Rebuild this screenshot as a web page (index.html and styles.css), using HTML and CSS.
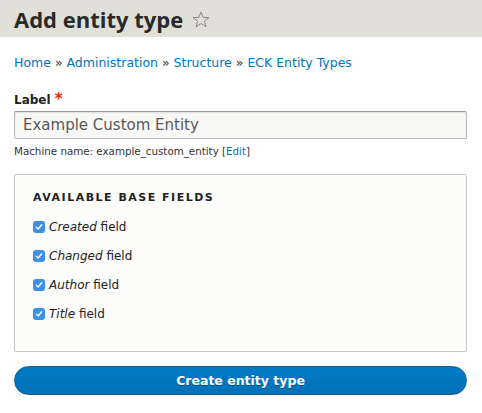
FILE: index.html
```html
<!DOCTYPE html>
<html>
<head>
<meta charset="utf-8">
<link rel="stylesheet" href="styles.css">
</head>
<body>
<header class="page-header">
  <h1 class="title">Add entity type <svg class="star" width="18" height="17" viewBox="0 0 20 19"><polygon points="10,1.2 12.4,7.1 18.8,7.3 13.8,11.3 15.6,17.6 10,14 4.4,17.6 6.2,11.3 1.2,7.3 7.6,7.1" fill="none" stroke="#8a8a80" stroke-width="1.1" stroke-linejoin="round"/></svg></h1>
</header>
<main class="content">
  <nav class="breadcrumb"><a href="#">Home</a> » <a href="#">Administration</a> » <a href="#">Structure</a> » <a href="#">ECK Entity Types</a></nav>
  <div class="form-item">
    <label class="label">Label <span class="req">*</span></label>
    <div class="input">Example Custom Entity</div>
    <div class="machine">Machine name: example_custom_entity <span class="edit">[<a href="#">Edit</a>]</span></div>
  </div>
  <fieldset class="fieldset">
    <div class="legend">Available base fields</div>
    <div class="checks">
      <div class="check"><span class="box"><svg width="8" height="8" viewBox="0 0 8 8"><path d="M1.3 4.2 L3.2 6 L6.7 1.8" fill="none" stroke="#fff" stroke-width="1.4" stroke-linecap="round" stroke-linejoin="round"/></svg></span><span><em>Created</em> field</span></div>
      <div class="check"><span class="box"><svg width="8" height="8" viewBox="0 0 8 8"><path d="M1.3 4.2 L3.2 6 L6.7 1.8" fill="none" stroke="#fff" stroke-width="1.4" stroke-linecap="round" stroke-linejoin="round"/></svg></span><span><em>Changed</em> field</span></div>
      <div class="check"><span class="box"><svg width="8" height="8" viewBox="0 0 8 8"><path d="M1.3 4.2 L3.2 6 L6.7 1.8" fill="none" stroke="#fff" stroke-width="1.4" stroke-linecap="round" stroke-linejoin="round"/></svg></span><span><em>Author</em> field</span></div>
      <div class="check"><span class="box"><svg width="8" height="8" viewBox="0 0 8 8"><path d="M1.3 4.2 L3.2 6 L6.7 1.8" fill="none" stroke="#fff" stroke-width="1.4" stroke-linecap="round" stroke-linejoin="round"/></svg></span><span><em>Title</em> field</span></div>
    </div>
  </fieldset>
  <button class="btn">Create entity type</button>
</main>
</body>
</html>
```
FILE: styles.css
```css
* { box-sizing: border-box; }
html, body { margin: 0; padding: 0; background: #fff; }
body { font-family: "DejaVu Sans", "Open Sans", sans-serif; color: #222330; width: 482px; height: 413px; overflow: hidden; }
.page-header { background: #e0e0d8; height: 37px; padding: 0 14px; display: flex; align-items: center; }
.title { margin: 0; font-family: "Open Sans", sans-serif; font-size: 22px; font-weight: bold; color: #2a2a2a; display: flex; align-items: center; gap: 9px; line-height: 1; }
.star { margin-top: 1px; }
.content { padding: 18px 15px 0 14px; }
.breadcrumb { font-size: 12.5px; color: #333; line-height: 16px; height: 16px; }
.breadcrumb a { color: #0074bd; text-decoration: none; }
.form-item { margin-top: 21px; }
.label { display: block; font-size: 12px; font-weight: bold; color: #222; line-height: 14px; }
.req { color: #e62600; font-size: 15px; }
.input { margin-top: 4px; height: 28px; border: 1px solid #b8b8b8; border-top-color: #999; border-radius: 2px; background: #f8f8f6; font-size: 15px; color: #595959; padding: 3px 8px; line-height: 20px; box-shadow: inset 0 1px 2px rgba(0,0,0,0.1); }
.machine { font-size: 10.3px; color: #333; margin-top: 6px; line-height: 13px; }
.machine .edit a { color: #0074bd; text-decoration: none; }
.fieldset { margin: 16px 0 0 0; padding: 16px 18px 0 18px; border: 1px solid #c8c8c8; border-radius: 2px; background: #fcfcfa; height: 178px; }
.legend { font-size: 11px; font-weight: bold; text-transform: uppercase; letter-spacing: 1.5px; color: #222; line-height: 14px; }
.checks { margin-top: 14px; display: flex; flex-direction: column; gap: 13px; }
.check { display: flex; align-items: center; gap: 4px; font-size: 12px; line-height: 16px; color: #222; }
.box { width: 12px; height: 12px; border-radius: 3px; background: #3b8eea; display: flex; align-items: center; justify-content: center; }
.btn { display: block; margin-top: 14px; width: 453px; height: 29px; border: 1px solid #1e5c90; border-radius: 15px; background: linear-gradient(#007bc6, #0071b8); color: #fff; font-family: "DejaVu Sans", sans-serif; font-weight: bold; font-size: 12.5px; text-shadow: 0 1px rgba(0,0,0,0.3); padding: 0; }
```
